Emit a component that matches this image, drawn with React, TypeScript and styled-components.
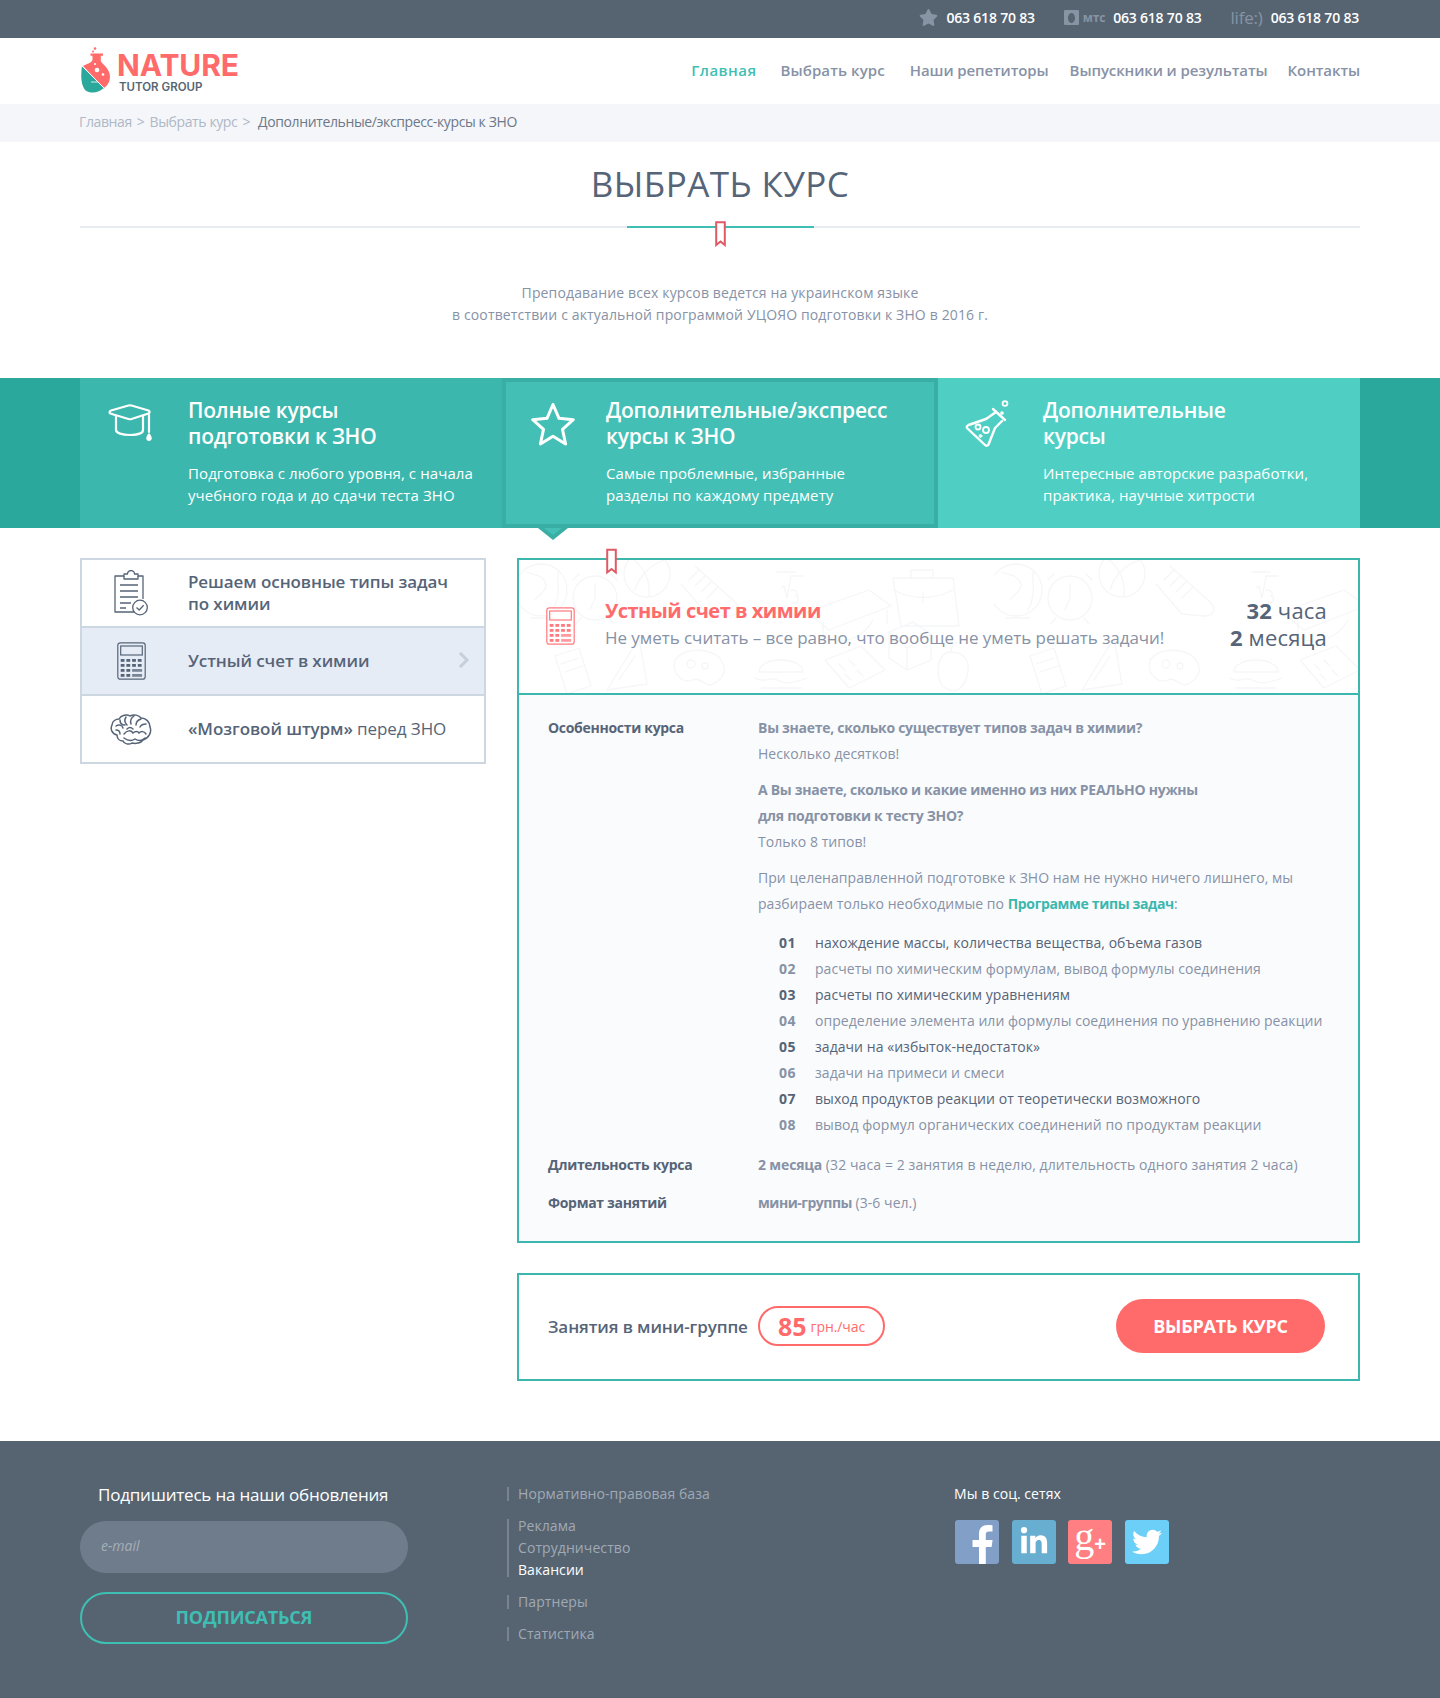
import React from "react";
import styled, { createGlobalStyle } from "styled-components";
import { FaLinkedinIn, FaTwitter, FaStar } from "react-icons/fa";

const Global = createGlobalStyle`
  html, body { margin: 0; padding: 0; background: #fff; }
  body { font-family: "Open Sans", "Liberation Sans", sans-serif; color: #566478; }
  * { box-sizing: border-box; }
`;
const teal = "#3bb7ae";
const coral = "#ff6b6b";
const slate = "#566478";
const muted = "#8792a6";

const Page = styled.div`width: 1440px; height: 1698px; overflow: hidden; display: flex; flex-direction: column;`;
const Wrap = styled.div`width: 1280px; margin: 0 auto;`;

const TopBar = styled.div`height: 38px; background: #566472; color: #fff;`;
const TopInner = styled(Wrap)`height: 38px; display: flex; justify-content: flex-end; align-items: center; gap: 29px; padding: 0 1px 3px 0;`;
const PhoneGroup = styled.div`display: flex; align-items: center; gap: 8px; font-size: 14px; font-weight: 600; letter-spacing: -0.2px; white-space: nowrap;`;
const Operator = styled.span`color: #8794a3; display: inline-flex; align-items: center; gap: 4px; font-size: ${p => p.$size || 12}px; font-weight: ${p => p.$weight || 700};`;
const Star = styled(FaStar)`width: 19px; height: 19px; color: #8794a3;`;

const NavBar = styled(Wrap)`height: 66px; display: flex; align-items: center; justify-content: space-between;`;
const Logo = styled.div`display: flex; align-items: flex-start; gap: 5px; height: 46px; margin-top: -3px;`;
const LogoWords = styled.div`display: flex; flex-direction: column; padding-top: 3px;`;
const LogoName = styled.div`font-family: "Inter", sans-serif; font-size: 30px; line-height: 30px; font-weight: 700; color: ${coral}; letter-spacing: -0.1px;`;
const LogoSub = styled.div`font-family: "Inter", sans-serif; font-size: 11.5px; line-height: 12px; margin-top: 1px; margin-left: 2px; font-weight: 600; color: #566472;`;
const NavList = styled.nav`display: flex; margin-top: -3px;`;
const NavLink = styled.a`font-size: 15px; font-weight: 600; color: ${p => p.$active ? "#3fbfb3" : muted}; margin-left: ${p => p.$gap}px; white-space: nowrap; letter-spacing: ${p => p.$ls ?? -0.1}px;`;

const CrumbBar = styled.div`height: 38px; background: #f5f6fa;`;
const CrumbInner = styled(Wrap)`height: 38px; display: flex; align-items: center; font-size: 14px; letter-spacing: -0.38px; color: #aeb8c6; padding: 0 0 4px 0; text-indent: -1px;`;
const CrumbSep = styled.span`margin: 0 6px;`;
const CrumbNow = styled.span`color: #6d7888; margin-left: 3px;`;

const TitleBlock = styled(Wrap)`height: 236px; display: flex; flex-direction: column; align-items: center;`;
const PageTitle = styled.h1`margin: 22px 0 0; font-size: 35px; line-height: 40px; font-weight: 400; color: ${slate}; letter-spacing: 0.43px; white-space: nowrap;`;
const Rule = styled.div`position: relative; width: 100%; height: 2px; background: #e8ecf1; margin-top: 22px; display: flex; justify-content: center;`;
const RuleAccent = styled.div`width: 187px; height: 2px; background: #3fbfb3;`;
const RuleMark = styled.svg`position: absolute; left: 635px; top: -5px;`;
const Intro = styled.p`margin: 54px 0 0; text-align: center; font-size: 14px; line-height: 22px; color: ${muted}; letter-spacing: 0.14px;`;

const Band = styled.div`height: 150px; background: #2ba89c;`;
const BandInner = styled(Wrap)`height: 150px; display: grid; grid-template-columns: 422px 436px 422px;`;
const BandCard = styled.div`
  position: relative; height: 150px; display: flex; background: ${p => p.$bg};
  padding: ${p => p.$active ? 15 : 19}px 0 0 ${p => p.$pad}px;
  border: ${p => p.$active ? "4px solid #38aea5" : "none"};
  color: #fff;
`;
const BandIcon = styled.div`flex: 0 0 ${p => p.$w}px; margin-top: ${p => p.$top}px;`;
const BandTitle = styled.div`font-size: 21px; line-height: 26px; font-weight: 600; letter-spacing: -0.22px; white-space: nowrap;`;
const BandText = styled.div`font-size: 15px; line-height: 22px; margin-top: 13px; letter-spacing: 0.1px; white-space: nowrap;`;
const Pointer = styled.svg`position: absolute; left: 32px; top: 146px;`;

const Main = styled(Wrap)`display: grid; grid-template-columns: 406px 843px; gap: 31px; padding-top: 30px; height: 913px;`;
const SideList = styled.div`height: 206px; border: 2px solid #cdd7e2;`;
const SideItem = styled.div`
  position: relative; display: flex; align-items: center; gap: 36px; padding-left: 28px;
  height: ${p => p.$first ? 66 : 68}px; border-top: ${p => p.$first ? 0 : "2px solid #cdd7e2"};
  background: ${p => p.$active ? "#e6ecf5" : "#fff"};
  font-size: 17px; line-height: 22px; color: ${slate}; font-weight: 400; letter-spacing: -0.08px;
  b { font-weight: 600; }
`;
const SideIcon = styled.div`flex: 0 0 42px; display: flex; justify-content: center; align-items: center;`;
const Chevron = styled.svg`position: absolute; right: 14px; top: 24px;`;

const Details = styled.div`display: flex; flex-direction: column; gap: 30px;`;
const Panel = styled.section`position: relative; border: 2px solid ${teal};`;
const PanelHead = styled.header`position: relative; height: 135px; overflow: hidden; border-bottom: 2px solid ${teal}; display: flex; align-items: center; padding: 0 31px 6px 27px; background: #fff;`;
const Doodles = styled.svg`position: absolute; left: 0; top: 0; width: 100%; height: 100%;`;
const HeadMark = styled.svg`position: absolute; left: 87px; top: -12px; z-index: 2;`;
const HeadIcon = styled.div`position: relative; flex: 0 0 59px; margin-top: 9px;`;
const HeadText = styled.div`position: relative; flex: 1;`;
const HeadTitle = styled.div`font-size: 20px; line-height: 27px; font-weight: 700; color: ${coral}; letter-spacing: -0.5px;`;
const HeadSub = styled.div`font-size: 17px; line-height: 27px; color: ${muted}; letter-spacing: -0.05px; white-space: nowrap;`;
const HeadMeta = styled.div`position: relative; text-align: right; font-size: 22px; line-height: 27px; color: ${slate}; letter-spacing: 0.2px; b { font-weight: 700; }`;

const PanelBody = styled.div`background: #fafbfd; padding: 20px 30px 25px 29px; height: 546px;`;
const Row = styled.div`display: grid; grid-template-columns: 210px 1fr; margin-top: ${p => p.$mt || 0}px; font-size: 14px; line-height: 26px; color: ${muted};`;
const RowLabel = styled.div`font-weight: 700; color: ${slate}; letter-spacing: -0.3px;`;
const Para = styled.p`margin: ${p => p.$mt || 0}px 0 0; letter-spacing: 0.04px; b { font-weight: 700; letter-spacing: -0.28px; } a { color: ${teal}; font-weight: 700; letter-spacing: -0.35px; }`;
const Steps = styled.ol`list-style: none; margin: 13px 0 0; padding: 0 0 0 21px;`;
const Step = styled.li`display: flex; color: ${p => p.$dark ? slate : muted}; letter-spacing: 0.05px; white-space: nowrap;`;
const StepNo = styled.span`flex: 0 0 36px; font-weight: 700; letter-spacing: 0.6px;`;
const Strong = styled.b<{ $ls?: number }>`font-weight: 700; letter-spacing: ${p => p.$ls ?? -0.15}px !important;`;
const Plain = styled.span`letter-spacing: 0.1px;`;

const PriceCard = styled.section`height: 108px; border: 2px solid ${teal}; display: flex; align-items: center; padding: 0 33px 2px 29px;`;
const PriceLabel = styled.div`flex: 0 0 210px; font-size: 17px; font-weight: 600; color: ${slate}; white-space: nowrap; letter-spacing: -0.1px;`;
const PricePill = styled.div`width: 127px; height: 40px; border: 2px solid ${coral}; border-radius: 20px; color: ${coral}; display: flex; align-items: center; justify-content: center; gap: 4px; font-size: 14px; letter-spacing: -0.1px; b { font-size: 25px; font-weight: 700; letter-spacing: 0; }`;
const BuyButton = styled.button`margin-left: auto; width: 209px; height: 54px; border: 0; border-radius: 27px; background: ${coral}; color: #fff; font: 700 18px "Open Sans", sans-serif; letter-spacing: -0.2px;`;

const Footer = styled.footer`flex: 1; background: #566472;`;
const FooterInner = styled(Wrap)`display: grid; grid-template-columns: 427px 447px 1fr; padding-top: 44px;`;
const SubHead = styled.div`padding-left: 18px; font-size: 17px; line-height: 22px; margin-top: -1px; margin-bottom: 1px; color: #fff; letter-spacing: -0.2px; white-space: nowrap;`;
const SubForm = styled.div`width: 328px; display: flex; flex-direction: column;`;
const EmailField = styled.div`height: 52px; margin-top: 14px; border-radius: 26px; background: #6f7c8c; color: #a5aeb9; font-style: italic; font-size: 14px; display: flex; align-items: center; padding: 0 0 4px 21px;`;
const SubButton = styled.button`height: 52px; margin-top: 19px; padding: 0 0 2px; border-radius: 26px; border: 2px solid #3fbfb3; background: transparent; color: #3fbfb3; font: 700 18px "Open Sans", sans-serif; letter-spacing: -0.2px;`;
const LinkCol = styled.div`padding-top: 2px; display: flex; flex-direction: column; gap: 18px;`;
const LinkGroup = styled.div`border-left: 2px solid #78838f; padding-left: 9px; display: flex; flex-direction: column; gap: 8px;`;
const FootLink = styled.a`font-size: 14px; line-height: 14px; color: ${p => p.$on ? "#fff" : "#a0a9b4"}; white-space: nowrap; letter-spacing: 0.08px;`;
const SocialHead = styled.div`font-size: 14px; line-height: 18px; color: #fff; letter-spacing: 0.05px;`;
const SocialRow = styled.div`display: flex; gap: 12.6px; margin-top: 17px; margin-left: 1px;`;
const SocialTile = styled.a`width: 44px; height: 44px; border-radius: 3px; background: ${p => p.$bg}; color: #fff; display: flex; align-items: center; justify-content: center; overflow: ${p => p.$open ? "visible" : "hidden"};`;
const GooglePlus = styled.span`font-family: "Liberation Serif", serif; font-size: 40px; line-height: 40px; margin-top: -9px; display: flex; align-items: flex-start; b { font-family: "Liberation Sans", sans-serif; font-size: 20px; line-height: 28px; margin-top: 13px; font-weight: 700; }`;

const MarkPath = "M1.2 1.2H9.8V24L5.5 20.5 1.2 24Z";

const LogoFlask = () => (
  <svg width="32" height="46" viewBox="0 0 32 46">
    <circle cx="15" cy="1.5" r="1.3" fill={coral} />
    <circle cx="13" cy="4.5" r="1" fill={coral} />
    <path d="M10.500 6.500h12.500v2.200h-2.200V14c1 3 9.200 7 9.200 16 0 4.500-2 8-6 11L3 19c3-2 8.500-3 9.500-6V8.700h-2Z" fill={coral} />
    <path d="M2 19C.5 29 1 38 5 43c6 4.500 14 2.500 19-2Z" fill="#2ba89c" />
    <path d="M2 19 24 41" stroke="#fff" strokeWidth="1" />
    <circle cx="17" cy="23" r="2.300" fill="#fff" /><circle cx="23" cy="27.500" r="1.300" fill="#fff" /><circle cx="15" cy="17" r="1" fill="#fff" />
    <path d="M11 35h7" stroke="#fff" strokeWidth=".8" />
  </svg>
);

const CapIcon = () => (
  <svg width="44" height="38" viewBox="0 0 44 38" fill="none" stroke="#fff" strokeWidth="2.2" strokeLinecap="round" strokeLinejoin="round">
    <path d="M1.5 8.5c0-1 .5-1.5 1.5-2L20.500 1.500c1-.3 2-.3 3 0L40.500 6.500c1.500.5 1.500 2.500 0 3L23.500 15c-1 .3-2 .3-3 0L3 9.800c-.8-.2-1.500-.5-1.500-1.300Z" />
    <path d="M8 12v14c0 3 6 5 14 5s13-2 13-5V12" />
    <path d="M41 11v17" />
    <path d="M41 30.500c-1 1.500-1.700 2.500-1.700 3.600a1.700 1.700 0 0 0 3.400 0c0-1.100-.7-2.100-1.700-3.600Z" fill="#fff" />
  </svg>
);
const StarIcon = () => (
  <svg width="44" height="44" viewBox="0 0 44 44" fill="none" stroke="#fff" strokeWidth="3" strokeLinejoin="round">
    <path d="M22 2.500l6 13.800 14.300 1.400-10.800 9.700 3.100 14.600L22 34.300 9.400 42l3.100-14.600L1.700 17.700 16 16.300Z" />
  </svg>
);
const BeakerIcon = () => (
  <svg width="46" height="47" viewBox="0 0 46 47" fill="none" stroke="#fff" strokeWidth="2.4" strokeLinecap="round" strokeLinejoin="round">
    <path d="M28 9l12 11" />
    <path d="M31 12l-10 7L3.500 25c-1.800.7-2.300 2.200-1 3.500L20 45c1.300 1.200 3 .8 3.700-1L30 28l7-7" />
    <circle cx="13" cy="27" r="2.500" strokeWidth="1.800" /><circle cx="21" cy="30" r="3" strokeWidth="1.800" /><circle cx="15.500" cy="36" r="1.400" fill="#fff" strokeWidth="1" />
    <circle cx="40" cy="3.500" r="2.400" strokeWidth="1.800" /><circle cx="37" cy="13" r="1.100" strokeWidth="1.500" />
  </svg>
);
const ClipIcon = () => (
  <svg width="34" height="46" viewBox="0 0 34 46" fill="none" stroke={slate} strokeWidth="1.300" strokeLinejoin="round">
    <path d="M20 42H1V6h9V4h3.500a3.500 3.500 0 0 1 7 0H24v2h5v23" />
    <path d="M10 6v3h14V6" />
    <path d="M6 15h18M6 21h18M6 27h18M6 33h11M6 38h6" />
    <circle cx="26" cy="37.500" r="7.300" />
    <path d="M22.500 37.500l2.700 2.500 4.500-4.700" />
  </svg>
);
const CalcIcon = ({ color = slate, w = 29, h = 38 }: { color?: string; w?: number; h?: number }) => (
  <svg width={w} height={h} viewBox="0 0 29 38" fill="none" stroke={color} strokeWidth="1.200">
    <rect x=".8" y=".8" width="27.400" height="36.400" rx="2.500" />
    <rect x="3.700" y="4" width="21.600" height="9" />
    <g fill={color} stroke="none">
      {[17, 22, 27, 32].map((y, r) => [3.7, 9.4, 15.1, 20.8].map((x, c) => (
        (r >= 2 && c >= 2) ? (c === 2 ? <rect key={`${r}${c}`} x={x} y={y} width="10" height="2.800" opacity=".75" /> : null) : <rect key={`${r}${c}`} x={x} y={y} width="3.800" height="2.800" />
      )))}
    </g>
  </svg>
);
const BrainIcon = () => (
  <svg width="42" height="32" viewBox="0 0 42 32" fill="none" stroke={slate} strokeWidth="1.500" strokeLinecap="round">
    <path d="M7 22C2 21 0 16 2 12c0-4 4-6 7-6 2-4 8-5 11-3 4-2 9-1 11 2 5 0 9 4 9 9 2 5-1 11-7 13-2 3-7 4-11 3-3 2-8 1-9-2-3 0-6-2-6-6Z" />
    <path d="M6 13c3-2 6-1 7 2M10 7c0 3 2 5 5 5M16 4c-2 3-1 6 1 8M24 3c-3 2-4 5-3 8M31 6c-3 1-5 3-5 6M36 11c-3 0-5 1-6 3" />
    <path d="M14 21c3-4 7-4 9-1 2-2 5-2 6 0 2-2 5-2 7 1M14 25c4 3 8 3 11 1 3 2 7 2 10-1M6 17c2 0 4 1 4 4M17 16c2-2 4-2 6 0" />
  </svg>
);

const DoodleLayer = () => (
  <Doodles aria-hidden="true">
    <defs>
      <pattern id="dd" width="475" height="133" patternUnits="userSpaceOnUse">
        <g fill="none" stroke="#f5f6f8" strokeWidth="1.300" strokeLinecap="round" strokeLinejoin="round">
          <circle cx="22" cy="30" r="26" /><path d="M8 12c8 4 14 2 18 10s-6 12-10 18M40 10c-4 10 4 22-6 40M12 58h24" />
          <circle cx="76" cy="38" r="22" /><path d="M76 24v14l-5 12M60 14l-6 6M92 14l6 6M62 58l-5 6M90 58l5 6" />
          <circle cx="128" cy="14" r="23" /><path d="M112 -2c10 6 20 20 18 38M146 0c-14 4-26 16-30 30" />
          <path d="M176 6l40 36c8 8 2 14-6 14l-22-2-26-30M180 10l-10 10M186 16l-10 10M192 22l-10 10M198 28l-10 10" />
          <path d="M258 12h18M262 28l3-2 3 12 4-22h12M272 30c6 0 8 4 5 6 4 1 3 8-3 7" />
          <path d="M288 52l62-22 22 16-62 24ZM304 62v16c20 8 40 0 50-18M368 50v14" />
          <path d="M374 18h60l6 48H382ZM392 18v-8h22v8M374 30c20 10 40 10 60 0M404 32v10" />
          <path d="M36 96l24-8 12 38-24 8ZM42 104l18-6M46 112l18-6" />
          <path d="M88 130l32-52 8 46ZM100 120l16-24" />
          <path d="M156 100c10-14 38-12 46 0s0 20-8 24-12-8-20-4-22-4-18-20Z" /><circle cx="172" cy="104" r="4" /><circle cx="186" cy="106" r="3" />
          <path d="M240 112c0-16 44-16 44 0ZM236 118c8 6 14-2 22 2s14 4 30-2M242 128h40" />
          <path d="M306 100l36-14 24 24-36 18ZM320 104l6 6M330 100l6 6M326 114l6 6M338 110l6 6" />
          <path d="M370 72l24-10 18 12v26l-24 10-18-12ZM370 72l18 16v22M388 88l24-14" />
          <path d="M432 92c14 0 20 10 16 24s-12 18-22 12-10-36 6-36ZM432 92c0-6 2-8 6-10" />
        </g>
      </pattern>
    </defs>
    <rect width="100%" height="100%" fill="url(#dd)" />
  </Doodles>
);

const steps = [
  "нахождение массы, количества вещества, объема газов",
  "расчеты по химическим формулам, вывод формулы соединения",
  "расчеты по химическим уравнениям",
  "определение элемента или формулы соединения по уравнению реакции",
  "задачи на «избыток-недостаток»",
  "задачи на примеси и смеси",
  "выход продуктов реакции от теоретически возможного",
  "вывод формул органических соединений по продуктам реакции",
];

const Phone = "063 618 70 83";

export default function App() {
  return (
    <Page>
      <Global />
      <TopBar>
        <TopInner>
          <PhoneGroup><Star />{Phone}</PhoneGroup>
          <PhoneGroup>
            <Operator>
              <svg width="15" height="15" viewBox="0 0 15 15"><path fillRule="evenodd" d="M1 0h13a1 1 0 0 1 1 1v13a1 1 0 0 1-1 1H1a1 1 0 0 1-1-1V1a1 1 0 0 1 1-1Zm6.500 3C5.500 3 4 5.500 4 8s1.500 5 3.500 5S11 10.500 11 8 9.500 3 7.500 3Z" fill="#8794a3" /></svg>
              мтс
            </Operator>
            {Phone}
          </PhoneGroup>
          <PhoneGroup><Operator $size={17} $weight={400}>life:)</Operator>{Phone}</PhoneGroup>
        </TopInner>
      </TopBar>

      <NavBar>
        <Logo>
          <LogoFlask />
          <LogoWords>
            <LogoName>NATURE</LogoName>
            <LogoSub>TUTOR GROUP</LogoSub>
          </LogoWords>
        </Logo>
        <NavList>
          <NavLink $active $gap={0} $ls={0.45}>Главная</NavLink>
          <NavLink $gap={24} $ls={0.1}>Выбрать курс</NavLink>
          <NavLink $gap={25}>Наши репетиторы</NavLink>
          <NavLink $gap={21}>Выпускники и результаты</NavLink>
          <NavLink $gap={20}>Контакты</NavLink>
        </NavList>
      </NavBar>

      <CrumbBar>
        <CrumbInner>
          Главная<CrumbSep>&gt;</CrumbSep>Выбрать курс<CrumbSep>&gt;</CrumbSep><CrumbNow>Дополнительные/экспресс-курсы к ЗНО</CrumbNow>
        </CrumbInner>
      </CrumbBar>

      <TitleBlock>
        <PageTitle>ВЫБРАТЬ КУРС</PageTitle>
        <Rule>
          <RuleAccent />
          <RuleMark width="11" height="26" viewBox="0 0 11 26"><path d={MarkPath} fill="#fff" stroke="#e05a66" strokeWidth="2" /></RuleMark>
        </Rule>
        <Intro>
          Преподавание всех курсов ведется на украинском языке<br />
          в соответствии с актуальной программой УЦОЯО подготовки к ЗНО в 2016 г.
        </Intro>
      </TitleBlock>

      <Band>
        <BandInner>
          <BandCard $bg="#3bb7ae" $pad={28}>
            <BandIcon $w={80} $top={7}><CapIcon /></BandIcon>
            <div>
              <BandTitle>Полные курсы<br />подготовки к ЗНО</BandTitle>
              <BandText>Подготовка с любого уровня, с начала<br />учебного года и до сдачи теста ЗНО</BandText>
            </div>
          </BandCard>
          <BandCard $bg="#43bfb6" $pad={25} $active>
            <BandIcon $w={75} $top={5}><StarIcon /></BandIcon>
            <div>
              <BandTitle>Дополнительные/экспресс<br />курсы к ЗНО</BandTitle>
              <BandText>Самые проблемные, избранные<br />разделы по каждому предмету</BandText>
            </div>
            <Pointer width="30" height="15" viewBox="0 0 30 15"><path d="M0 0h30L15 12Z" fill="#38aea5" /><path d="M6 0h18L15 7Z" fill="#43bfb6" /></Pointer>
          </BandCard>
          <BandCard $bg="#4fcfc4" $pad={27}>
            <BandIcon $w={78} $top={3}><BeakerIcon /></BandIcon>
            <div>
              <BandTitle>Дополнительные<br />курсы</BandTitle>
              <BandText>Интересные авторские разработки,<br />практика, научные хитрости</BandText>
            </div>
          </BandCard>
        </BandInner>
      </Band>

      <Main>
        <div>
          <SideList>
            <SideItem $first>
              <SideIcon><ClipIcon /></SideIcon>
              <b>Решаем основные типы задач<br />по химии</b>
            </SideItem>
            <SideItem $active>
              <SideIcon><CalcIcon /></SideIcon>
              <b>Устный счет в химии</b>
              <Chevron width="12" height="16" viewBox="0 0 12 16" fill="none" stroke="#c5d0dc" strokeWidth="3"><path d="M2 1l7 7-7 7" /></Chevron>
            </SideItem>
            <SideItem>
              <SideIcon><BrainIcon /></SideIcon>
              <span><b>«Мозговой штурм»</b> перед ЗНО</span>
            </SideItem>
          </SideList>
        </div>

        <Details>
          <Panel>
            <HeadMark width="11" height="27" viewBox="0 0 11 26"><path d={MarkPath} fill="#fff" stroke="#e05a66" strokeWidth="2" /></HeadMark>
            <PanelHead>
              <DoodleLayer />
              <HeadIcon><CalcIcon color="#ff7b80" /></HeadIcon>
              <HeadText>
                <HeadTitle>Устный счет в химии</HeadTitle>
                <HeadSub>Не уметь считать – все равно, что вообще не уметь решать задачи!</HeadSub>
              </HeadText>
              <HeadMeta><b>32</b> часа<br /><b>2</b> месяца</HeadMeta>
            </PanelHead>
            <PanelBody>
              <Row>
                <RowLabel>Особенности курса</RowLabel>
                <div>
                  <Para><b>Вы знаете, сколько существует типов задач в химии?</b><br />Несколько десятков!</Para>
                  <Para $mt={10}><b>А Вы знаете, сколько и какие именно из них РЕАЛЬНО нужны<br />для подготовки к тесту ЗНО?</b><br />Только 8 типов!</Para>
                  <Para $mt={10}>При целенаправленной подготовке к ЗНО нам не нужно ничего лишнего, мы<br />разбираем только необходимые по <a>Программе типы задач</a>:</Para>
                  <Steps>
                    {steps.map((s, i) => (
                      <Step key={s} $dark={i % 2 === 0}><StepNo>{`0${i + 1}`}</StepNo>{s}</Step>
                    ))}
                  </Steps>
                </div>
              </Row>
              <Row $mt={14}>
                <RowLabel>Длительность курса</RowLabel>
                <Para><Strong>2 месяца</Strong> <Plain>(32 часа = 2 занятия в неделю, длительность одного занятия 2 часа)</Plain></Para>
              </Row>
              <Row $mt={12}>
                <RowLabel>Формат занятий</RowLabel>
                <Para><Strong $ls={-0.5}>мини-группы</Strong> (3-6 чел.)</Para>
              </Row>
            </PanelBody>
          </Panel>

          <PriceCard>
            <PriceLabel>Занятия в мини-группе</PriceLabel>
            <PricePill><b>85</b> грн./час</PricePill>
            <BuyButton>ВЫБРАТЬ КУРС</BuyButton>
          </PriceCard>
        </Details>
      </Main>

      <Footer>
        <FooterInner>
          <SubForm>
            <SubHead>Подпишитесь на наши обновления</SubHead>
            <EmailField>e-mail</EmailField>
            <SubButton>ПОДПИСАТЬСЯ</SubButton>
          </SubForm>
          <LinkCol>
            <LinkGroup><FootLink>Нормативно-правовая база</FootLink></LinkGroup>
            <LinkGroup>
              <FootLink>Реклама</FootLink>
              <FootLink>Сотрудничество</FootLink>
              <FootLink $on>Вакансии</FootLink>
            </LinkGroup>
            <LinkGroup><FootLink>Партнеры</FootLink></LinkGroup>
            <LinkGroup><FootLink>Статистика</FootLink></LinkGroup>
          </LinkCol>
          <div>
            <SocialHead>Мы в соц. сетях</SocialHead>
            <SocialRow>
              <SocialTile $bg="#829fc7">
                <svg width="44" height="44" viewBox="0 0 44 44"><path d="M24 44V27h-6.500v-7H24v-6c0-6 3.500-9 8.500-9 2.400 0 4.300.2 5 .3v6.200H34c-2.800 0-3.200 1.300-3.200 3.300V20h6.800l-1 7h-5.800v17Z" fill="#fff" /></svg>
              </SocialTile>
              <SocialTile $bg="#68aed0"><FaLinkedinIn size={30} /></SocialTile>
              <SocialTile $bg="#ff7f82" $open><GooglePlus>g<b>+</b></GooglePlus></SocialTile>
              <SocialTile $bg="#6bcff8"><FaTwitter size={30} /></SocialTile>
            </SocialRow>
          </div>
        </FooterInner>
      </Footer>
    </Page>
  );
}
